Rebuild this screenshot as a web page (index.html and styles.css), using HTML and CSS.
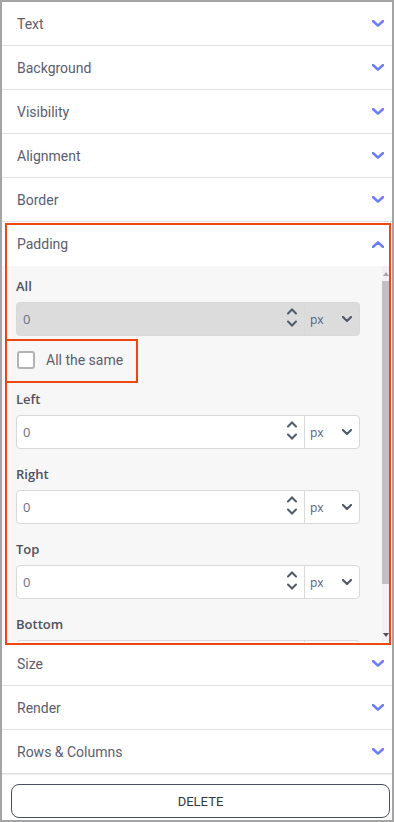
FILE: index.html
```html
<!DOCTYPE html>
<html lang="en">
<head>
  <meta charset="UTF-8">
  <title>Element Properties</title>
  <link rel="stylesheet" href="styles.css">
</head>
<body>
  <div class="panel">
    <div class="section">
      <div class="section-head"><span>Text</span><svg class="chev" viewBox="0 0 12 7"><path d="M1.2 1.2 L6 5.6 L10.8 1.2"/></svg></div>
    </div>
    <div class="section">
      <div class="section-head"><span>Background</span><svg class="chev" viewBox="0 0 12 7"><path d="M1.2 1.2 L6 5.6 L10.8 1.2"/></svg></div>
    </div>
    <div class="section">
      <div class="section-head"><span>Visibility</span><svg class="chev" viewBox="0 0 12 7"><path d="M1.2 1.2 L6 5.6 L10.8 1.2"/></svg></div>
    </div>
    <div class="section">
      <div class="section-head"><span>Alignment</span><svg class="chev" viewBox="0 0 12 7"><path d="M1.2 1.2 L6 5.6 L10.8 1.2"/></svg></div>
    </div>
    <div class="section">
      <div class="section-head"><span>Border</span><svg class="chev" viewBox="0 0 12 7"><path d="M1.2 1.2 L6 5.6 L10.8 1.2"/></svg></div>
    </div>

    <!-- open section -->
    <div class="section open">
      <div class="section-head"><span>Padding</span><svg class="chev" viewBox="0 0 12 7"><path d="M1.2 5.8 L6 1.4 L10.8 5.8"/></svg></div>
      <div class="section-body">
        <div class="scroll-content">
          <div class="field">
            <div class="field-label">All</div>
            <div class="unit-input disabled">
              <div class="num">
                <input type="text" value="0" disabled>
                <svg class="spin" viewBox="0 0 10 22"><path d="M1 5.5 L5 1.5 L9 5.5 M1 13.5 L5 17.5 L9 13.5"/></svg>
              </div>
              <div class="unit"><span>px</span><svg class="caret" viewBox="0 0 10 6"><path d="M1 1 L5 5 L9 1"/></svg></div>
            </div>
          </div>

          <label class="check">
            <span class="box"></span>
            <span>All the same</span>
            <span class="mark mark-check"></span>
          </label>

          <div class="field">
            <div class="field-label">Left</div>
            <div class="unit-input">
              <div class="num">
                <input type="text" value="0">
                <svg class="spin" viewBox="0 0 10 22"><path d="M1 5.5 L5 1.5 L9 5.5 M1 13.5 L5 17.5 L9 13.5"/></svg>
              </div>
              <div class="unit"><span>px</span><svg class="caret" viewBox="0 0 10 6"><path d="M1 1 L5 5 L9 1"/></svg></div>
            </div>
          </div>
          <div class="field">
            <div class="field-label">Right</div>
            <div class="unit-input">
              <div class="num">
                <input type="text" value="0">
                <svg class="spin" viewBox="0 0 10 22"><path d="M1 5.5 L5 1.5 L9 5.5 M1 13.5 L5 17.5 L9 13.5"/></svg>
              </div>
              <div class="unit"><span>px</span><svg class="caret" viewBox="0 0 10 6"><path d="M1 1 L5 5 L9 1"/></svg></div>
            </div>
          </div>
          <div class="field">
            <div class="field-label">Top</div>
            <div class="unit-input">
              <div class="num">
                <input type="text" value="0">
                <svg class="spin" viewBox="0 0 10 22"><path d="M1 5.5 L5 1.5 L9 5.5 M1 13.5 L5 17.5 L9 13.5"/></svg>
              </div>
              <div class="unit"><span>px</span><svg class="caret" viewBox="0 0 10 6"><path d="M1 1 L5 5 L9 1"/></svg></div>
            </div>
          </div>
          <div class="field">
            <div class="field-label">Bottom</div>
            <div class="unit-input">
              <div class="num">
                <input type="text" value="0">
                <svg class="spin" viewBox="0 0 10 22"><path d="M1 5.5 L5 1.5 L9 5.5 M1 13.5 L5 17.5 L9 13.5"/></svg>
              </div>
              <div class="unit"><span>px</span><svg class="caret" viewBox="0 0 10 6"><path d="M1 1 L5 5 L9 1"/></svg></div>
            </div>
          </div>
        </div>
        <!-- scrollbar drawn by hand -->
        <div class="scrollbar">
          <div class="sb-btn"><span class="tri up"></span></div>
          <div class="sb-thumb"></div>
          <div class="sb-rest"></div>
          <div class="sb-btn"><span class="tri down"></span></div>
        </div>
      </div>
      <div class="mark mark-section"></div>
    </div>

    <div class="section">
      <div class="section-head"><span>Size</span><svg class="chev" viewBox="0 0 12 7"><path d="M1.2 1.2 L6 5.6 L10.8 1.2"/></svg></div>
    </div>
    <div class="section">
      <div class="section-head"><span>Render</span><svg class="chev" viewBox="0 0 12 7"><path d="M1.2 1.2 L6 5.6 L10.8 1.2"/></svg></div>
    </div>
    <div class="section">
      <div class="section-head"><span>Rows &amp; Columns</span><svg class="chev" viewBox="0 0 12 7"><path d="M1.2 1.2 L6 5.6 L10.8 1.2"/></svg></div>
    </div>

    <div class="footer">
      <button type="button" class="delete-btn">DELETE</button>
    </div>
  </div>
</body>
</html>
```

FILE: styles.css
```css
:root {
  --frame: #a4a4a4;
  --line: #e2e2e2;
  --text: #5b5d70;
  --label: #4e5163;
  --accent: #6d7cfb;
  --icon: #4f5a6b;
  --mark: #ec4712;
  --field-border: #d9d9d9;
}
* { box-sizing: border-box; margin: 0; padding: 0; }
body {
  font-family: Roboto, "Liberation Sans", sans-serif;
  background: #fff;
  color: var(--text);
}

.panel {
  position: relative;
  width: 394px; height: 822px;
  border: 2px solid var(--frame);
  background: #fff;
  display: flex; flex-direction: column;
  overflow: hidden;
}

.section { position: relative; border-bottom: 1px solid var(--line); }
.section-head {
  height: 43px;
  display: flex; align-items: center; justify-content: space-between;
  padding: 0 8px 0 15px;
  font-size: 14px;
}
.section.open .section-head { height: 44px; }
.section.open { border-bottom: none; }
.chev { width: 12px; height: 7px; fill: none; stroke: var(--accent); stroke-width: 2.6; stroke-linecap: round; stroke-linejoin: round; }

/* open section body with its scrollbar */
.section-body {
  display: flex;
  height: 376px;
  margin-right: 2px;
  background: #f7f7f7;
}
.scroll-content {
  flex: 1; min-width: 0;
  overflow: hidden;
  padding: 10px 22px 24px 14px;
}
.scrollbar {
  width: 8px;
  background: #f1f1f1;
  display: flex; flex-direction: column;
}
.sb-btn { height: 15px; display: flex; align-items: center; justify-content: center; }
.sb-thumb { height: 303px; background: #c1c1c1; }
.sb-rest { flex: 1; }
.tri { width: 0; height: 0; border-left: 3px solid transparent; border-right: 3px solid transparent; }
.tri.up { border-bottom: 4px solid #a8a8a8; }
.tri.down { border-top: 4px solid #505050; }

.field { margin-bottom: 15px; }
.field-label {
  font-family: "Open Sans", sans-serif;
  font-weight: 600; font-size: 13px;
  line-height: 20px; color: var(--label);
  margin-bottom: 6px;
}

.unit-input {
  display: flex; height: 34px;
  border: 1px solid var(--field-border); border-radius: 4px;
  background: #fff;
}
.unit-input.disabled { background: #dcdcdc; }
.num { flex: 1; display: flex; align-items: center; padding: 0 7px 0 6px; }
.num input {
  flex: 1; min-width: 0;
  border: none; background: transparent; outline: none;
  font-family: "Open Sans", sans-serif; font-size: 13px;
  color: #6b6e85;
}
.spin { width: 10px; height: 22px; fill: none; stroke: var(--icon); stroke-width: 2; stroke-linecap: round; }
.unit {
  width: 55px;
  border-left: 1px solid var(--field-border);
  display: flex; align-items: center; justify-content: space-between;
  padding: 0 7px 0 5px;
  font-family: "Open Sans", sans-serif; font-size: 12px;
  color: #5b5c80;
}
.caret { width: 10px; height: 6px; fill: none; stroke: var(--icon); stroke-width: 2.2; stroke-linecap: round; stroke-linejoin: round; }

.check {
  position: relative;
  display: flex; align-items: center; gap: 11px;
  height: 18px;
  margin: 15px 0 20px 1px;
  font-size: 14px;
}
.check .box {
  width: 18px; height: 18px;
  border: 2px solid #b3b3b3; border-radius: 3px;
  background: #fff;
}

/* orange annotation frames */
.mark { position: absolute; border: 2px solid var(--mark); pointer-events: none; z-index: 2; }
.mark-section { top: 1px; left: 3px; right: 1px; bottom: -3px; }
.mark-check { top: -12px; left: -12px; width: 133px; height: 44px; }

.footer {
  flex: 1;
  padding: 9px 2px 2px 9px;
  border-top: 1px solid #ececec;
}
.delete-btn {
  width: 100%; height: 34px;
  border: 1.5px solid #4a4d5e; border-radius: 8px;
  background: #fff;
  font-family: Roboto, sans-serif; font-size: 13px;
  color: #333645;
}
```
